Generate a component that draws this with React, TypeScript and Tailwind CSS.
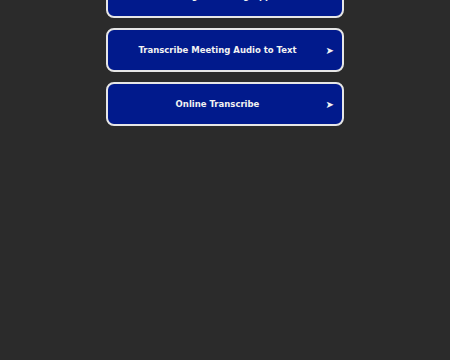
import React from "react";

const items = ["Meeting Recording Apps", "Transcribe Meeting Audio to Text", "Online Transcribe"];

export default function App() {
  return (
    <div className="w-[450px] h-[360px] overflow-hidden bg-[#2b2b2b]" style={{ fontFamily: '"DejaVu Sans", sans-serif' }}>
      <div className="-mt-[26px] flex flex-col items-center gap-[10px]">
        {items.map((t) => (
          <a
            key={t}
            href="#"
            className="flex h-[44px] w-[238px] items-center rounded-[8px] border-2 border-[#e6e6e6] bg-[#011a8c] text-[8.5px] font-bold text-[#f2f2f2] no-underline"
          >
            <span className="flex-1 pl-[2px] text-center">{t}</span>
            <span className="w-[17px] pr-[8px] text-right text-[10px]">➤</span>
          </a>
        ))}
      </div>
    </div>
  );
}
